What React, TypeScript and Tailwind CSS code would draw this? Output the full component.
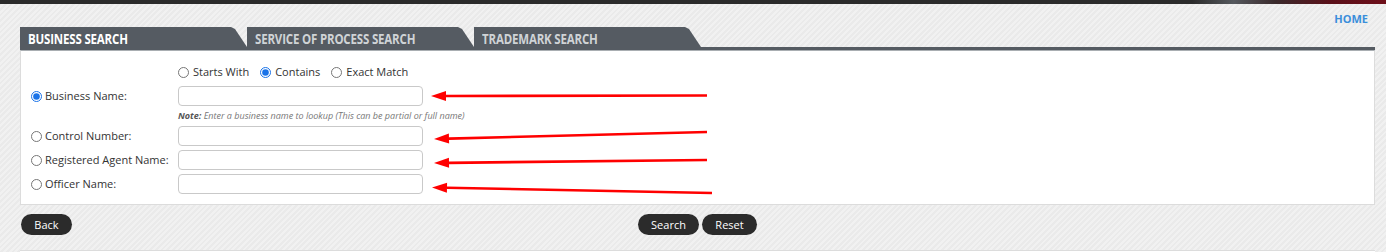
import { useState } from "react";

const tabs = ["BUSINESS SEARCH", "SERVICE OF PROCESS SEARCH", "TRADEMARK SEARCH"];

const matchOptions = ["Starts With", "Contains", "Exact Match"];

const fields = [
  { id: "name", label: "Business Name:" },
  { id: "control", label: "Control Number:" },
  { id: "agent", label: "Registered Agent Name:" },
  { id: "officer", label: "Officer Name:" },
];

// red annotation arrows: [x1, y1, tipX, tipY]
const arrows = [
  [707, 95.5, 431, 96],
  [707, 132, 434, 139],
  [707, 160, 434, 163],
  [712, 193, 432, 187.5],
];

function Arrow({ x1, y1, x2, y2 }: { x1: number; y1: number; x2: number; y2: number }) {
  const len = Math.hypot(x1 - x2, y1 - y2);
  const ux = (x1 - x2) / len;
  const uy = (y1 - y2) / len;
  const bx = x2 + ux * 15;
  const by = y2 + uy * 15;
  const head = `${x2},${y2} ${bx - uy * 5},${by + ux * 5} ${bx + uy * 5},${by - ux * 5}`;
  return (
    <g>
      <line x1={x1} y1={y1} x2={bx} y2={by} stroke="#ff0000" strokeWidth={2.6} />
      <polygon points={head} fill="#ff0000" />
    </g>
  );
}

function PillButton({ label, width }: { label: string; width: string }) {
  return (
    <button
      className={`flex items-center justify-center h-[21px] ${width} rounded-full bg-[#2b2b2b] text-white text-[11px] leading-[14px]`}
    >
      {label}
    </button>
  );
}

export default function App() {
  const [match, setMatch] = useState("Contains");
  const [field, setField] = useState("name");

  return (
    <div className="relative w-[1386px] h-[252px] overflow-hidden bg-[repeating-linear-gradient(135deg,#f1f1f1_0px,#f1f1f1_2px,#eaeaea_2px,#eaeaea_4px)] font-['Open_Sans',sans-serif] text-[#333]">
      <div className="h-[4px] bg-[linear-gradient(90deg,#2b2b2b_0%,#2b2b2b_86%,#55595e_89%,#3a2a2c_92%,#5a1019_96%,#6e0f1a_100%)]" />

      <div className="h-[23px] flex justify-end pr-[18px] pt-[8px]">
        <a className="text-[11px] leading-[14px] font-bold text-[#3a8edb]">HOME</a>
      </div>

      <div className="ml-[20px] mr-[11px]">
        <div className="flex h-[20px]">
          {tabs.map((t, i) => (
            <div
              key={t}
              className={`w-[227px] h-[20px] pl-[8px] pt-[3px] bg-[#555b62] [clip-path:polygon(0_0,211px_0,215px_2px,227px_20px,0_20px)] font-bold text-[14px] leading-[17px] whitespace-nowrap ${
                i === 0 ? "text-white" : "text-[#cfd3d6]"
              }`}
            >
              <span className="inline-block origin-left scale-x-[0.82] tracking-[-0.2px]">{t}</span>
            </div>
          ))}
        </div>
        <div className="h-[3px] bg-[#555b62]" />

        <div className="relative bg-white border border-[#dcdcdc] border-t-[#a9aeb2] pl-[10px] pt-[14px] pb-[10px]">
          <div className="ml-[147px] flex items-center h-[14px] gap-[11px]">
            {matchOptions.map((o) => (
              <label key={o} className="flex items-center gap-[4px] text-[11px] leading-[14px]">
                <input
                  type="radio"
                  name="match"
                  checked={match === o}
                  onChange={() => setMatch(o)}
                  className="m-0 w-[11px] h-[11px] accent-[#1a73e8]"
                />
                {o}
              </label>
            ))}
          </div>

          {fields.map((f, i) => (
            <div key={f.id}>
              <div className={`flex items-center h-[20px] ${i === 0 ? "mt-[7px]" : "mt-[4px]"}`}>
                <label className="w-[147px] flex items-center gap-[3px] text-[11px] leading-[14px]">
                  <input
                    type="radio"
                    name="field"
                    checked={field === f.id}
                    onChange={() => setField(f.id)}
                    className="m-0 w-[11px] h-[11px] accent-[#1a73e8]"
                  />
                  {f.label}
                </label>
                <input
                  type="text"
                  className="w-[245px] h-[20px] rounded-[4px] border border-[#c9c9c9] bg-white"
                />
              </div>
              {i === 0 && (
                <div className="ml-[147px] mt-[4px] h-[12px] text-[9px] leading-[12px] italic text-[#777] whitespace-nowrap">
                  <b className="text-[#555]">Note:</b> Enter a business name to lookup (This can be partial or full name)
                </div>
              )}
            </div>
          ))}
        </div>

        <div className="mt-[9px] grid grid-cols-[1fr_auto_1fr] items-center h-[21px]">
          <div className="flex pl-[1px]">
            <PillButton label="Back" width="w-[51px]" />
          </div>
          <div className="flex gap-[3px]">
            <PillButton label="Search" width="w-[61px]" />
            <PillButton label="Reset" width="w-[55px]" />
          </div>
          <div />
        </div>

        <div className="mt-[15px] h-[10px] bg-white border-t border-[#dcdcdc]" />
      </div>

      <svg className="absolute left-0 top-0 pointer-events-none" width={1386} height={252}>
        {arrows.map(([x1, y1, x2, y2], i) => (
          <Arrow key={i} x1={x1} y1={y1} x2={x2} y2={y2} />
        ))}
      </svg>
    </div>
  );
}
